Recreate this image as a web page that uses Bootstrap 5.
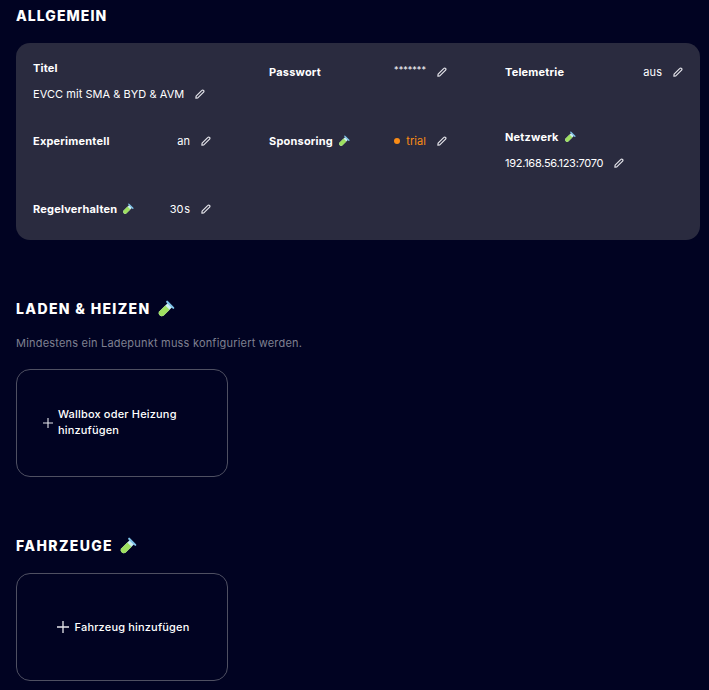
<!DOCTYPE html>
<html lang="de">
<head>
<meta charset="utf-8">
<title>Konfiguration</title>
<link href="https://cdn.jsdelivr.net/npm/bootstrap@5.3.0/dist/css/bootstrap.min.css" rel="stylesheet">
<style>
html,body{background:#010322;color:#fff;font-family:Inter,"Liberation Sans",sans-serif;height:690px;overflow:hidden}
.page-wrap{padding:6px 9px 0 16px}
.sec-head{font-size:14px;font-weight:800;line-height:20px;letter-spacing:1.05px;margin:0 0 17px;text-transform:uppercase;display:flex;align-items:center;gap:6px}
.sec-next{margin-top:59px;letter-spacing:1.36px}
.sec-head.with-note{margin-bottom:15px}
.sec-note{font-size:11px;line-height:18px;color:#7f8091;letter-spacing:.2px;margin:0 0 17px}
.panel-box{background:#2a2b3f;border-radius:14px;padding:16px 17px;display:grid;grid-template-columns:178px 178px 178px;column-gap:58px;grid-template-rows:52px 51px 28px;row-gap:17px}
.field-item{font-size:11px;line-height:18px;letter-spacing:.05px}
.field-inline{display:flex;justify-content:space-between;align-items:center;margin-top:4px;align-self:start}
.field-name{font-weight:700;display:flex;align-items:center;gap:5px;letter-spacing:.2px}
.field-val{display:flex;align-items:center;gap:11px;white-space:nowrap}
.field-stack .field-val{margin-top:8px}
.val-orange{color:#fa8c16}
.val-addr{letter-spacing:-.27px}
.val-secret{font-size:9px;line-height:14px;margin-bottom:4px}
.val-time{word-spacing:-2.5px}
.dot-mark{width:6px;height:6px;border-radius:50%;background:#fa8c16;margin-right:6px;display:inline-block}
.val-inner{display:flex;align-items:center}
.add-tile{width:212px;height:108px;border:1px solid #4f5062;border-radius:14px;color:#fff;font-size:11px;line-height:16px;font-weight:500;letter-spacing:.17px;display:flex;align-items:center;justify-content:center;padding:0 26px;gap:5px;background:transparent}
.add-tile svg{flex:none}
.add-tile span{text-align:left}
.add-wrap span{flex:1;margin-bottom:2px}
.add-center{padding-left:28px;gap:6px}
</style>
</head>
<body>
<svg width="0" height="0" class="d-block" aria-hidden="true">
<defs>
<symbol id="ic-pen" viewBox="0 0 10 10">
<path d="M1.1 7.2 6.9 1.4a1.1 1.1 0 0 1 1.6 0l.1.1a1.1 1.1 0 0 1 0 1.6L2.8 8.9 .9 9.2Z" fill="none" stroke="#e4e4ea" stroke-width="1.2" stroke-linejoin="round"/>
</symbol>
<symbol id="ic-tube" viewBox="0 0 16 16">
<path d="M9.6 2.6 13.4 6.4 6 13.8a2.7 2.7 0 0 1-3.8-3.8Z" fill="#cdeff2"/>
<path d="M7.4 4.8 11.2 8.6 6 13.8a2.7 2.7 0 0 1-3.8-3.8Z" fill="#9fe060"/>
<path d="M9 1.5 14.5 7" stroke="#7fc4ea" stroke-width="1.8" stroke-linecap="round"/>
</symbol>
</defs>
</svg>
<main class="page-wrap">
<h3 class="sec-head">Allgemein</h3>
<div class="panel-box">
<div class="field-item field-stack">
<div class="field-name">Titel</div>
<div class="field-val">EVCC mit SMA &amp; BYD &amp; AVM <svg width="10" height="10"><use href="#ic-pen"/></svg></div>
</div>
<div class="field-item field-inline">
<div class="field-name">Passwort</div>
<div class="field-val"><span class="val-secret">*******</span><svg width="10" height="10"><use href="#ic-pen"/></svg></div>
</div>
<div class="field-item field-inline">
<div class="field-name">Telemetrie</div>
<div class="field-val"><span>aus</span><svg width="10" height="10"><use href="#ic-pen"/></svg></div>
</div>
<div class="field-item field-inline">
<div class="field-name">Experimentell</div>
<div class="field-val"><span>an</span><svg width="10" height="10"><use href="#ic-pen"/></svg></div>
</div>
<div class="field-item field-inline">
<div class="field-name">Sponsoring <svg width="12" height="12"><use href="#ic-tube"/></svg></div>
<div class="field-val"><span class="val-inner val-orange"><i class="dot-mark"></i>trial</span><svg width="10" height="10"><use href="#ic-pen"/></svg></div>
</div>
<div class="field-item field-stack">
<div class="field-name">Netzwerk <svg width="12" height="12"><use href="#ic-tube"/></svg></div>
<div class="field-val"><span class="val-addr">192.168.56.123:7070</span> <svg width="10" height="10"><use href="#ic-pen"/></svg></div>
</div>
<div class="field-item field-inline">
<div class="field-name">Regelverhalten <svg width="12" height="12"><use href="#ic-tube"/></svg></div>
<div class="field-val"><span class="val-time">30 s</span><svg width="10" height="10"><use href="#ic-pen"/></svg></div>
</div>
</div>

<h3 class="sec-head sec-next with-note">Laden &amp; Heizen <svg width="18" height="18"><use href="#ic-tube"/></svg></h3>
<p class="sec-note">Mindestens ein Ladepunkt muss konfiguriert werden.</p>
<button type="button" class="btn add-tile add-wrap">
<svg width="10" height="10" viewBox="0 0 10 10"><path d="M5 0v10M0 5h10" stroke="#e6e6ec" stroke-width="1.1"/></svg>
<span>Wallbox oder Heizung hinzufügen</span>
</button>

<h3 class="sec-head sec-next">Fahrzeuge <svg width="18" height="18"><use href="#ic-tube"/></svg></h3>
<button type="button" class="btn add-tile add-center">
<svg width="12" height="12" viewBox="0 0 12 12"><path d="M6 0v12M0 6h12" stroke="#e6e6ec" stroke-width="1.3"/></svg>
<span>Fahrzeug hinzufügen</span>
</button>
</main>
</body>
</html>
